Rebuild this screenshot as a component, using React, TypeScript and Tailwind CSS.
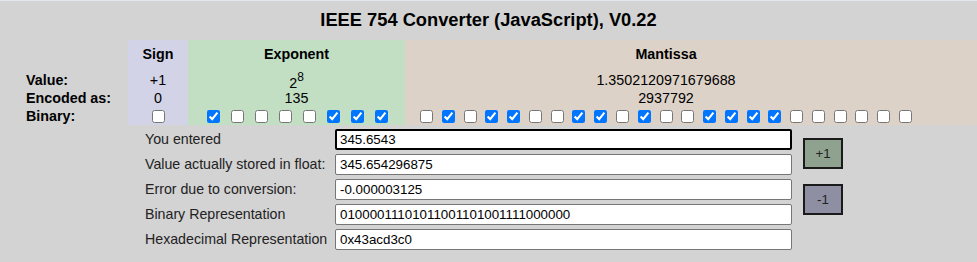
import React from 'react';

const expBits = '10000111';
const mantBits = '01011001101001111000000';

const fields = [
  { label: 'You entered', value: '345.6543', focused: true },
  { label: 'Value actually stored in float:', value: '345.654296875' },
  { label: 'Error due to conversion:', value: '-0.000003125' },
  { label: 'Binary Representation', value: '01000011101011001101001111000000' },
  { label: 'Hexadecimal Representation', value: '0x43acd3c0' },
];

const Bit: React.FC<{ on: boolean }> = ({ on }) => (
  <input type="checkbox" defaultChecked={on} className="w-[13px] h-[13px] shrink-0" />
);

const App: React.FC = () => {
  return (
    <div
      className="w-[977px] h-[262px] bg-[#d3d3d3] text-black overflow-hidden"
      style={{ fontFamily: '"Liberation Sans", Arial, sans-serif' }}
    >
      <div className="h-px bg-[#e2e6ee]" />
      <h1 className="h-[39px] pt-[8px] text-[18.3px] leading-[21px] font-bold text-center">
        IEEE 754 Converter (JavaScript), V0.22
      </h1>

      {/* bit table */}
      <div className="flex text-[14.3px] leading-[17px]">
        <div className="w-[128px] flex flex-col font-bold pl-[26px]">
          <div className="h-[28px]" />
          <div className="h-[21px] flex items-end">Value:</div>
          <div className="h-[18px] flex items-center">Encoded as:</div>
          <div className="h-[18px] flex items-center">Binary:</div>
        </div>

        <div className="w-[60px] bg-[#d3d3e7] flex flex-col items-center">
          <div className="h-[28px] flex items-center font-bold pt-[1px]">Sign</div>
          <div className="h-[21px] flex items-end">+1</div>
          <div className="h-[18px] flex items-center">0</div>
          <div className="h-[18px] flex items-center">
            <Bit on={false} />
          </div>
        </div>

        <div className="w-[217px] bg-[#c2dfc4] flex flex-col items-center">
          <div className="h-[28px] flex items-center font-bold pt-[1px]">Exponent</div>
          <div className="h-[21px] flex items-end">
            <span className="relative top-[3px]">
              2<sup className="text-[12px] -top-[0.6em]">8</sup>
            </span>
          </div>
          <div className="h-[18px] flex items-center">135</div>
          <div className="h-[18px] flex items-center gap-[11px] pl-[2px]">
            {expBits.split('').map((b, i) => (
              <Bit key={i} on={b === '1'} />
            ))}
          </div>
        </div>

        <div className="flex-1 bg-[#ddd2c7] flex flex-col items-center pr-[50px]">
          <div className="h-[28px] flex items-center font-bold pt-[1px]">Mantissa</div>
          <div className="h-[21px] flex items-end">1.3502120971679688</div>
          <div className="h-[18px] flex items-center">2937792</div>
          <div className="h-[18px] flex items-center gap-[8.77px]">
            {mantBits.split('').map((b, i) => (
              <Bit key={i} on={b === '1'} />
            ))}
          </div>
        </div>
      </div>

      {/* form */}
      <div className="flex pl-[145px]">
        <div className="flex flex-col gap-[4px] pt-[4px]">
          {fields.map((f) => (
            <div key={f.label} className="flex items-center h-[21px]">
              <label className="w-[190px] text-[14.2px] text-[#222]">{f.label}</label>
              <input
                readOnly
                value={f.value}
                className={`w-[457px] h-[21px] bg-white rounded-[2px] text-[13.33px] text-black outline-none ${
                  f.focused ? 'border-2 border-black px-[3px]' : 'border border-[#767676] px-[4px]'
                }`}
              />
            </div>
          ))}
        </div>
        <div className="flex flex-col pl-[11px] pt-[13px] gap-[15px]">
          <button className="w-[40px] h-[31px] bg-[#8fa28f] border-2 border-[#1a1a1a] text-[13.33px] text-[#222]">
            +1
          </button>
          <button className="w-[40px] h-[31px] bg-[#8f8fa3] border-2 border-[#1a1a1a] text-[13.33px] text-[#222]">
            -1
          </button>
        </div>
      </div>
    </div>
  );
};

export default App;
